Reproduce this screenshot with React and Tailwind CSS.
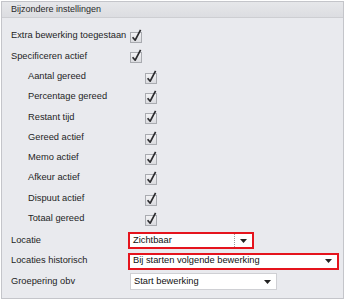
import React from 'react';

const Check = () => (
  <svg width="14" height="14" viewBox="0 0 14 14" className="block">
    <defs>
      <linearGradient id="cbg" x1="0" y1="0" x2="0" y2="1">
        <stop offset="0" stopColor="#f4f4f6" />
        <stop offset="1" stopColor="#d9dade" />
      </linearGradient>
    </defs>
    <rect x="0.5" y="3.5" width="11" height="10" fill="url(#cbg)" stroke="#a9abb0" />
    <path d="M2.6 8.2 L5.2 11.2 L10.6 0.8" fill="none" stroke="#2b2b2e" strokeWidth="1.7" strokeLinejoin="round" />
  </svg>
);

const Row = ({ label, indent }) => (
  <div className={`flex items-center h-[20.33px] ${indent ? 'pl-[26px]' : 'pl-[9px]'}`}>
    <div className={indent ? 'w-[117px]' : 'w-[119px]'}>{label}</div>
    <Check />
  </div>
);

const Arrow = () => (
  <svg width="7" height="4" viewBox="0 0 7 4" className="block">
    <path d="M0 0 L7 0 L3.5 4 Z" fill="#222" />
  </svg>
);

const Select = ({ value, width, red, sep }) => (
  <div
    className={`flex items-center h-[17px] bg-white ${red ? 'border-2 border-[#e5141d]' : 'border border-[#cfd0d4] ml-[2px]'}`}
    style={{ width }}
  >
    <div className="flex-1 pl-[3px] text-[#111]">{value}</div>
    {sep && <div className="h-full border-l border-dotted border-[#9a9a9a] mr-[5px]" />}
    <div className="pr-[5px]"><Arrow /></div>
  </div>
);

export default function App() {
  const items = [
    'Aantal gereed',
    'Percentage gereed',
    'Restant tijd',
    'Gereed actief',
    'Memo actief',
    'Afkeur actief',
    'Dispuut actief',
    'Totaal gereed',
  ];
  return (
    <div className="w-[345px] h-[300px] bg-white pt-[1px] pl-[1px]" style={{ fontFamily: '"Liberation Sans", Arial, sans-serif' }}>
      <div className="w-[343px] h-[298px] border border-[#c4c5ca] bg-[#e9eaee] text-[9.3px] text-[#1e1e1e]">
        <div className="h-[16px] flex items-center pl-[9px] bg-gradient-to-b from-[#e6e7ea] to-[#dcdde1] border-b border-[#cdced2] text-[9px] text-[#2a2a2a]">
          Bijzondere instellingen
        </div>
        <div className="pt-[8px]">
          <Row label="Extra bewerking toegestaan" />
          <Row label="Specificeren actief" />
          {items.map((t) => (
            <Row key={t} label={t} indent />
          ))}
        </div>
        <div className="pt-[3px] flex flex-col gap-[3.5px]">
          <div className="flex items-center pl-[9px]">
            <div className="w-[117px]">Locatie</div>
            <Select value="Zichtbaar" width={126} red sep />
          </div>
          <div className="flex items-center pl-[9px]">
            <div className="w-[117px]">Locaties historisch</div>
            <Select value="Bij starten volgende bewerking" width={211} red />
          </div>
          <div className="flex items-center pl-[9px]">
            <div className="w-[117px]">Groepering obv</div>
            <Select value="Start bewerking" width={147} />
          </div>
        </div>
      </div>
    </div>
  );
}
